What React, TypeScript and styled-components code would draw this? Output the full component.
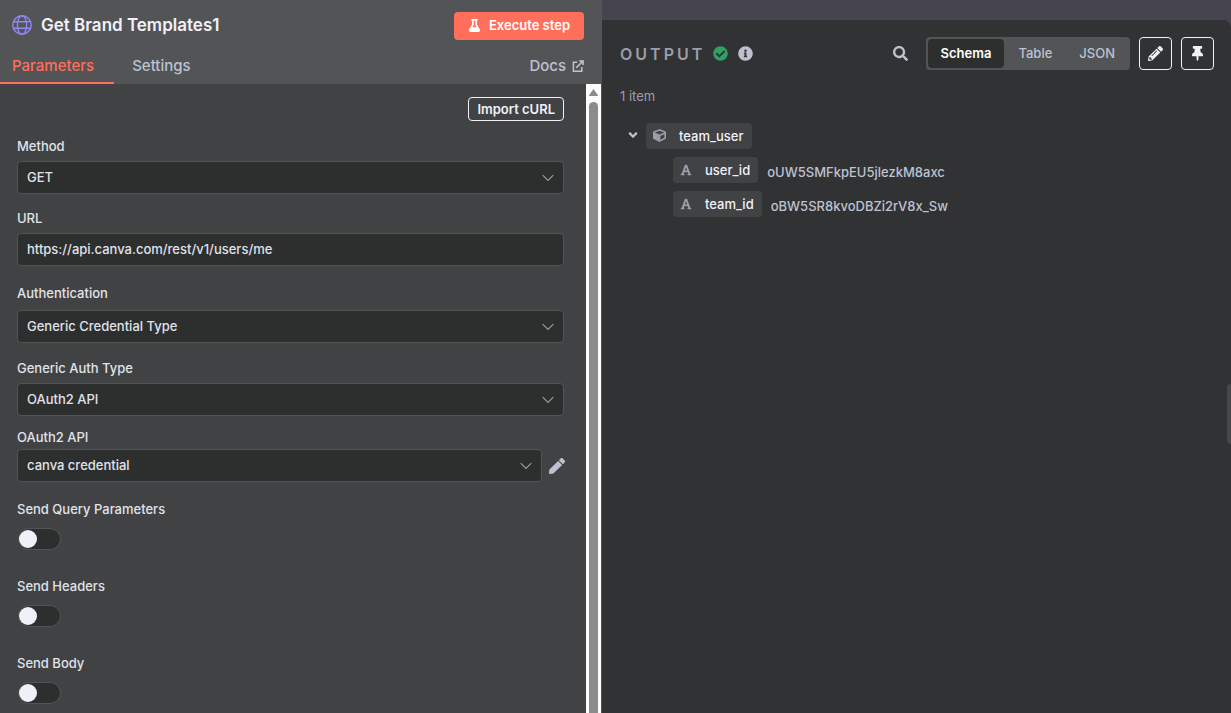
import React from "react";
import styled, { createGlobalStyle } from "styled-components";
import {
  FaAngleDown,
  FaCheckCircle,
  FaCube,
  FaFlask,
  FaFont,
  FaInfoCircle,
  FaPen,
  FaPencilAlt,
  FaSearch,
  FaThumbtack,
} from "react-icons/fa";

const c = {
  strip: "#46454f",
  header: "#525456",
  form: "#414244",
  field: "#2d2f2e",
  output: "#313234",
  line: "#525456",
  chip: "#414244",
  accent: "#ff6f5c",
  bright: "#f0f1f8",
  text: "#e0e2ea",
  soft: "#bec2d0",
  dim: "#9a9eaa",
  green: "#2ca266",
};

const GlobalStyle = createGlobalStyle`
  *, *::before, *::after { box-sizing: border-box; }
  body {
    margin: 0;
    background: ${c.output};
    color: ${c.text};
    font-family: Inter, "Liberation Sans", sans-serif;
    font-size: 13px;
    line-height: 16px;
  }
  button, input, select { font: inherit; color: inherit; }
  button { cursor: pointer; padding: 0; border: 0; background: none; }
`;

const Page = styled.div`
  display: flex;
  min-height: 100vh;
`;

const NodePanel = styled.section`
  flex: 601 1 0;
  min-width: 0;
  display: flex;
  flex-direction: column;
  background: ${c.form};
  border-right: 1px solid ${c.line};
`;

const NodeHeader = styled.header`
  background: ${c.header};
  display: flex;
  flex-direction: column;
  justify-content: space-between;
  height: 84px;
  padding: 12px 17px 0 12px;
`;

const TitleRow = styled.div`
  display: flex;
  align-items: center;
  justify-content: space-between;
  height: 28px;
`;

const Title = styled.h1`
  display: flex;
  align-items: center;
  gap: 9px;
  margin: 0 0 2px;
  font-size: 17px;
  line-height: 24px;
  font-weight: 600;
  color: ${c.bright};
`;

const ExecuteButton = styled.button`
  display: flex;
  align-items: center;
  gap: 8px;
  height: 28px;
  padding: 0 14px 2px;
  border-radius: 4px;
  background: ${c.accent};
  color: #fff;
  font-weight: 600;
`;

const Tabs = styled.nav`
  display: flex;
  gap: 6px;
  height: 36px;
  margin-left: -12px;
  font-size: 15px;
  line-height: 20px;
  font-weight: 500;
`;

const Tab = styled.button<{ $active?: boolean }>`
  height: 36px;
  padding: 2px 20px 0 12px;
  border-bottom: 2px solid ${(p) => (p.$active ? c.accent : "transparent")};
  color: ${(p) => (p.$active ? c.accent : c.soft)};
`;

const DocsLink = styled.a`
  display: flex;
  align-items: center;
  gap: 6px;
  height: 36px;
  margin-left: auto;
  color: ${c.soft};
  text-decoration: none;
`;

const FormArea = styled.div`
  flex: 1;
  display: flex;
`;

const Form = styled.form`
  flex: 1;
  min-width: 0;
  display: flex;
  flex-direction: column;
  padding: 13px 22px 8px 17px;
  font-weight: 500;
`;

const ImportButton = styled.button`
  align-self: flex-end;
  height: 24px;
  padding: 0 8px;
  border: 1px solid ${c.bright};
  border-radius: 4px;
  color: ${c.bright};
  font-weight: 600;
`;

const Field = styled.div<{ $space: number; $gap: number }>`
  display: flex;
  flex-direction: column;
  align-items: stretch;
  gap: ${(p) => p.$gap}px;
  margin-top: ${(p) => p.$space}px;
`;

const control = `
  width: 100%;
  height: 33px;
  padding: 0 9px 2px;
  border: 1px solid ${c.line};
  border-radius: 4px;
  background: ${c.field};
  color: ${c.text};
  outline: none;
`;

const TextInput = styled.input`
  ${control}
`;

const SelectBox = styled.div`
  position: relative;
  flex: 1;
  svg {
    position: absolute;
    right: 10px;
    top: 13px;
    pointer-events: none;
  }
`;

const NativeSelect = styled.select`
  ${control}
  appearance: none;
`;

const CredentialRow = styled.div`
  display: flex;
  align-items: center;
  gap: 7px;
`;

const EditButton = styled.button`
  display: flex;
  color: ${c.soft};
  margin-right: -1px;
`;

const Toggle = styled.input`
  appearance: none;
  display: flex;
  align-items: center;
  width: 43px;
  height: 22px;
  margin: 0 0 0 1px;
  border: 1px solid ${c.line};
  border-radius: 11px;
  background: ${c.field};
  cursor: pointer;
  &::before {
    content: "";
    width: 18px;
    height: 18px;
    border-radius: 50%;
    background: ${c.bright};
  }
  &:checked { justify-content: flex-end; }
`;

const ScrollTrack = styled.div`
  display: flex;
  flex-direction: column;
  align-items: center;
  gap: 6px;
  width: 15px;
  padding-top: 5px;
  background: #fcfcfc;
`;

const ScrollThumb = styled.div`
  flex: 1;
  width: 9px;
  border-radius: 5px 5px 0 0;
  background: #8b8b8b;
`;

const OutputSide = styled.div`
  flex: 629 1 0;
  min-width: 0;
  display: flex;
  flex-direction: column;
  padding-top: 20px;
  background: ${c.strip};
`;

const OutputPanel = styled.section`
  position: relative;
  flex: 1;
  padding: 17px 17px 0 18px;
  border-top-right-radius: 8px;
  background: ${c.output};
`;

const OutputHeader = styled.header`
  display: flex;
  align-items: center;
  height: 33px;
`;

const OutputTitle = styled.h2`
  margin: 0 8px 0 0;
  font-size: 16px;
  line-height: 20px;
  font-weight: 600;
  letter-spacing: 3px;
  color: ${c.dim};
`;

const StatusIcons = styled.div`
  display: flex;
  gap: 10px;
  color: ${c.soft};
`;

const Tools = styled.div`
  display: flex;
  align-items: center;
  gap: 9px;
  margin-left: auto;
`;

const SearchButton = styled.button`
  display: flex;
  margin-right: 9px;
  color: ${c.soft};
`;

const ViewSwitch = styled.div`
  display: flex;
  gap: 1px;
  padding: 2px;
  border-radius: 4px;
  background: ${c.header};
`;

const ViewButton = styled.button<{ $active?: boolean }>`
  height: 29px;
  padding: 0 13px 1px;
  border-radius: 4px;
  background: ${(p) => (p.$active ? c.field : "transparent")};
  color: ${(p) => (p.$active ? "#fff" : c.soft)};
  font-weight: ${(p) => (p.$active ? 600 : 500)};
`;

const SquareButton = styled.button`
  display: flex;
  align-items: center;
  justify-content: center;
  width: 33px;
  height: 33px;
  border: 1px solid ${c.bright};
  border-radius: 4px;
  color: ${c.bright};
`;

const ItemCount = styled.p`
  margin: 18px 0 19px;
  color: ${c.dim};
`;

const Tree = styled.ul<{ $nested?: boolean }>`
  display: flex;
  flex-direction: column;
  gap: 8px;
  margin: 0;
  padding: ${(p) => (p.$nested ? "8px 0 0 47px" : "0 0 0 6px")};
  list-style: none;
`;

const TreeRow = styled.div`
  display: flex;
  align-items: center;
`;

const Collapse = styled.button`
  display: flex;
  width: 20px;
  padding-bottom: 2px;
  color: ${c.soft};
`;

const Chip = styled.span`
  display: flex;
  align-items: center;
  gap: 13px;
  height: 26px;
  padding: 0 8px 1px 7px;
  border-radius: 4px;
  background: ${c.chip};
  color: ${c.bright};
  font-weight: 500;
  svg { color: ${c.dim}; }
`;

const Value = styled.span`
  padding: 3px 0 0 9px;
  color: ${c.soft};
  font-weight: 500;
`;

const SideHandle = styled.div`
  position: absolute;
  right: 0;
  top: 364px;
  width: 4px;
  height: 60px;
  border-radius: 4px 0 0 4px;
  background: #464749;
`;

const Globe = () => (
  <svg width="20" height="20" viewBox="0 0 20 20" fill="none" stroke="#8f87f7" strokeWidth="1.4" aria-hidden="true">
    <circle cx="10" cy="10" r="9.2" />
    <ellipse cx="10" cy="10" rx="4.6" ry="9.2" />
    <path d="M1.5 6.7h17M1.5 13.3h17" />
  </svg>
);

const Chevron = () => (
  <svg width="12" height="8" viewBox="0 0 12 8" fill="none" stroke="#9a9eaa" strokeWidth="1.1" aria-hidden="true">
    <path d="M.7 1.2 6 6.4l5.3-5.2" />
  </svg>
);

const External = () => (
  <svg width="12" height="12" viewBox="0 0 12 12" fill="none" stroke="currentColor" strokeWidth="1.5" aria-hidden="true">
    <path d="M5.2 2.3H1.4v8.9h8.4V7M4.3 7.8 10.6 1.4M7.2 1h3.9v3.9" />
  </svg>
);

function Select({ id, value }: { id: string; value: string }) {
  return (
    <SelectBox>
      <NativeSelect id={id} defaultValue={value}>
        <option>{value}</option>
      </NativeSelect>
      <Chevron />
    </SelectBox>
  );
}

function SwitchField({ id, label, space }: { id: string; label: string; space: number }) {
  return (
    <Field $space={space} $gap={11}>
      <label htmlFor={id}>{label}</label>
      <Toggle id={id} type="checkbox" role="switch" />
    </Field>
  );
}

const leaves = [
  { name: "user_id", value: "oUW5SMFkpEU5jlezkM8axc" },
  { name: "team_id", value: "oBW5SR8kvoDBZi2rV8x_Sw" },
];

export default function App() {
  return (
    <>
      <GlobalStyle />
      <Page>
        <NodePanel>
          <NodeHeader>
            <TitleRow>
              <Title>
                <Globe />
                Get Brand Templates1
              </Title>
              <ExecuteButton type="button">
                <FaFlask size={13} />
                Execute step
              </ExecuteButton>
            </TitleRow>
            <Tabs>
              <Tab type="button" $active>Parameters</Tab>
              <Tab type="button">Settings</Tab>
              <DocsLink href="#docs">
                Docs
                <External />
              </DocsLink>
            </Tabs>
          </NodeHeader>
          <FormArea>
            <Form>
              <ImportButton type="button">Import cURL</ImportButton>
              <Field $space={17} $gap={7}>
                <label htmlFor="method">Method</label>
                <Select id="method" value="GET" />
              </Field>
              <Field $space={16} $gap={7}>
                <label htmlFor="url">URL</label>
                <TextInput id="url" type="text" defaultValue="https://api.canva.com/rest/v1/users/me" />
              </Field>
              <Field $space={19} $gap={9}>
                <label htmlFor="auth">Authentication</label>
                <Select id="auth" value="Generic Credential Type" />
              </Field>
              <Field $space={17} $gap={7}>
                <label htmlFor="generic">Generic Auth Type</label>
                <Select id="generic" value="OAuth2 API" />
              </Field>
              <Field $space={13} $gap={4}>
                <label htmlFor="credential">OAuth2 API</label>
                <CredentialRow>
                  <Select id="credential" value="canva credential" />
                  <EditButton type="button" aria-label="Edit credential">
                    <FaPen size={16} />
                  </EditButton>
                </CredentialRow>
              </Field>
              <SwitchField id="query" label="Send Query Parameters" space={19} />
              <SwitchField id="headers" label="Send Headers" space={28} />
              <SwitchField id="body" label="Send Body" space={28} />
            </Form>
            <ScrollTrack aria-hidden="true">
              <svg width="9" height="7" viewBox="0 0 9 7" fill="#8b8b8b">
                <path d="M4.5 0 9 6.2 8.6 7H.4L0 6.2z" />
              </svg>
              <ScrollThumb />
            </ScrollTrack>
          </FormArea>
        </NodePanel>
        <OutputSide>
          <OutputPanel>
            <OutputHeader>
              <OutputTitle>OUTPUT</OutputTitle>
              <StatusIcons>
                <FaCheckCircle size={15} color={c.green} />
                <FaInfoCircle size={15} />
              </StatusIcons>
              <Tools>
                <SearchButton type="button" aria-label="Search">
                  <FaSearch size={15} />
                </SearchButton>
                <ViewSwitch>
                  <ViewButton type="button" $active>Schema</ViewButton>
                  <ViewButton type="button">Table</ViewButton>
                  <ViewButton type="button">JSON</ViewButton>
                </ViewSwitch>
                <SquareButton type="button" aria-label="Edit output">
                  <FaPencilAlt size={15} />
                </SquareButton>
                <SquareButton type="button" aria-label="Pin data">
                  <FaThumbtack size={15} />
                </SquareButton>
              </Tools>
            </OutputHeader>
            <ItemCount>1 item</ItemCount>
            <Tree>
              <li>
                <TreeRow>
                  <Collapse type="button" aria-label="Collapse team_user">
                    <FaAngleDown size={14} />
                  </Collapse>
                  <Chip>
                    <FaCube size={13} />
                    team_user
                  </Chip>
                </TreeRow>
                <Tree $nested>
                  {leaves.map((leaf) => (
                    <li key={leaf.name}>
                      <TreeRow>
                        <Chip>
                          <FaFont size={12} />
                          {leaf.name}
                        </Chip>
                        <Value>{leaf.value}</Value>
                      </TreeRow>
                    </li>
                  ))}
                </Tree>
              </li>
            </Tree>
            <SideHandle />
          </OutputPanel>
        </OutputSide>
      </Page>
    </>
  );
}
